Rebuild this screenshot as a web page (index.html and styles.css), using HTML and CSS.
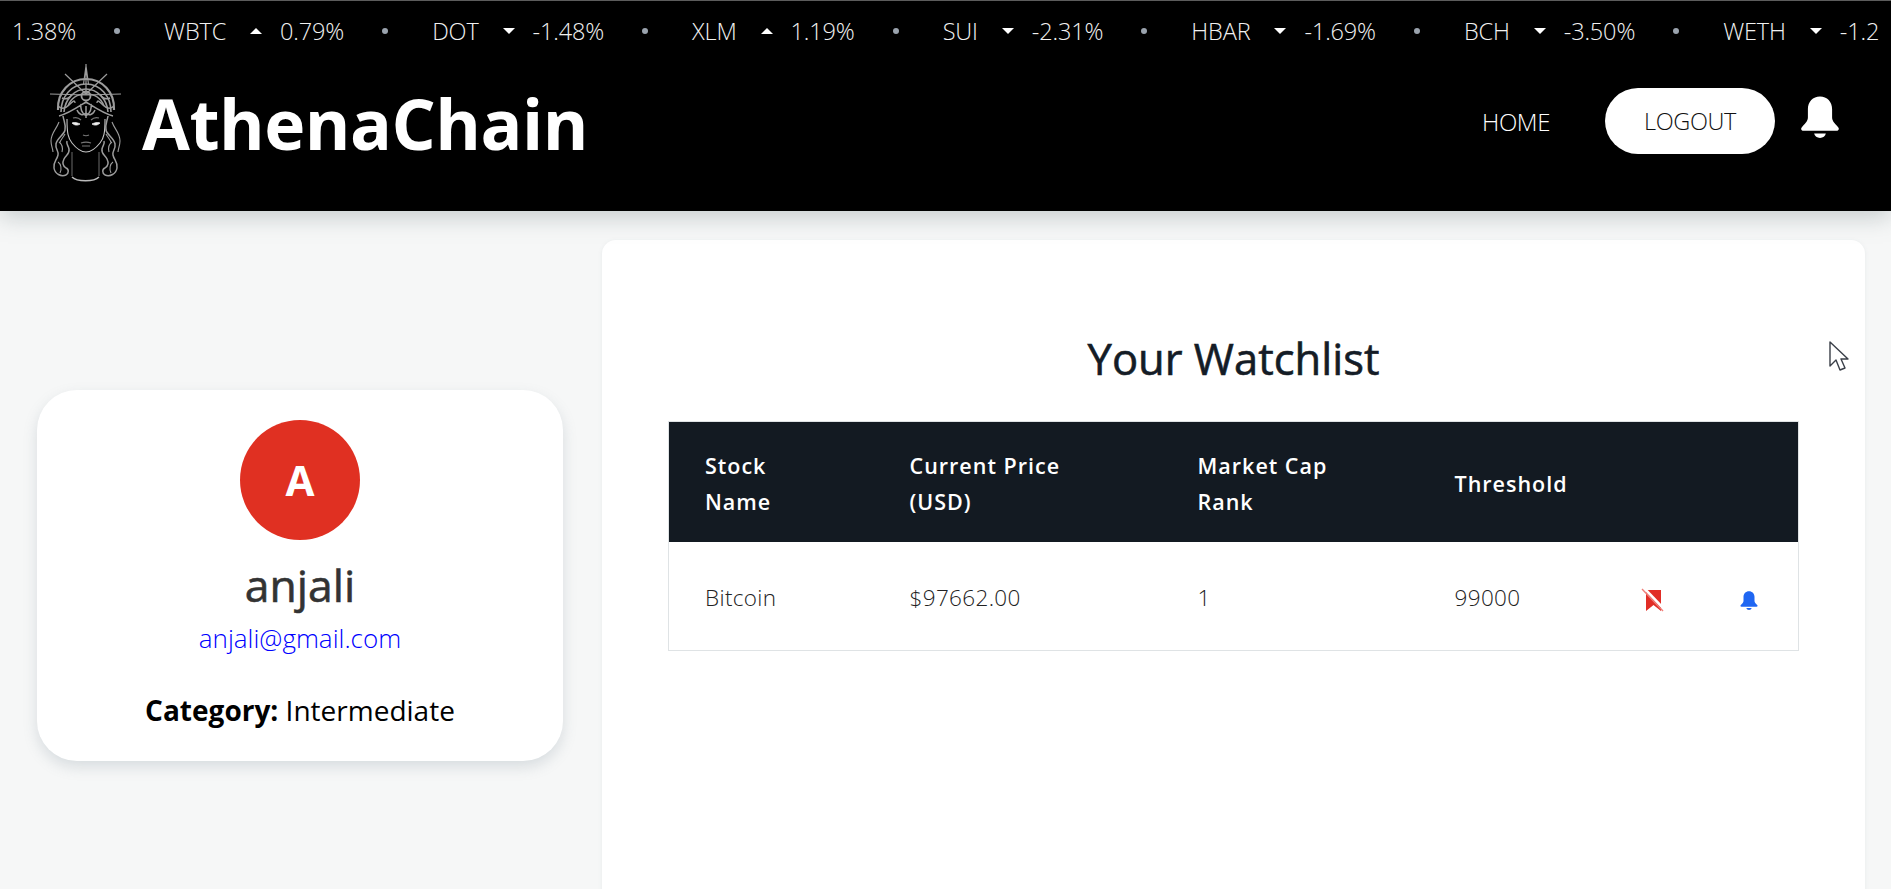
FILE: index.html
```html
<!DOCTYPE html>
<html lang="en">
<head>
<meta charset="utf-8">
<title>AthenaChain</title>
<link rel="stylesheet" href="styles.css">
</head>
<body>
<header class="header">
  <div class="ticker">
    <span class="val first">1.38%</span><i class="dot"></i>
    <span class="sym">WBTC</span><i class="up"></i><span class="val">0.79%</span><i class="dot"></i>
    <span class="sym">DOT</span><i class="down"></i><span class="val">-1.48%</span><i class="dot"></i>
    <span class="sym">XLM</span><i class="up"></i><span class="val">1.19%</span><i class="dot"></i>
    <span class="sym">SUI</span><i class="down"></i><span class="val">-2.31%</span><i class="dot"></i>
    <span class="sym">HBAR</span><i class="down"></i><span class="val">-1.69%</span><i class="dot"></i>
    <span class="sym">BCH</span><i class="down"></i><span class="val">-3.50%</span><i class="dot"></i>
    <span class="sym">WETH</span><i class="down"></i><span class="val">-1.2</span>
  </div>
  <div class="navbar">
    <div class="brand">
      <svg class="logo" viewBox="0 0 75 120" fill="none" stroke="#9c9c9c" stroke-width="1.2" aria-hidden="true">
        <path d="M38 0v30M38 2l-2.500 18M38 2l2.500 18M17 10l21 20M59 10L38 30M2 30l36 1M73 30l-35 1" />
        <path d="M10 46C9 28 22 15 38 15s29 13 28 31" stroke-width="2.200"/>
        <path d="M13 48C13 32 24 20 38 20s25 12 25 28M16 48C17 35 27 25 38 25s21 10 22 23M20 42c3-8 10-12 18-12s15 4 18 12" stroke-width="1.600"/>
        <path d="M10 42c4 4 8 2 11-1s6-6 6-2M66 42c-4 4-8 2-11-1s-6-6-6-2M14 34c4 2 8 0 10-4M62 34c-4 2-8 0-10-4" stroke-width="1.400"/>
        <circle cx="38" cy="32" r="4.500" stroke-width="1.800"/>
        <path d="M11 52c9-2 19-9 27-14 8 5 18 12 27 14M33 40c-1 5 1 9 5 12 4-3 6-7 5-12M38 42v12M29 46c2 5 6 6 9 3M47 46c-2 5-6 6-9 3" stroke-width="1.500"/>
        <path d="M19 55c0 14 1 19 5 24 4 5 9 9 14 9s10-4 14-9c4-5 5-10 5-24" stroke="#c4c4c4" stroke-width="1.100"/>
        <path d="M24 59c3-1 6 0 8 1-3 2-6 1-8-1zM52 59c-3-1-6 0-8 1 3 2 6 1 8-1z" fill="#eee" stroke="#eee" stroke-width=".8"/>
        <path d="M25 54c3-1 6 0 8 2M51 54c-3-1-6 0-8 2M35 71c2 1 4 1 6 0M33 79c3-1 7-1 10 0M34 82h8" stroke="#777"/>
        <path d="M15 52c1 6 3 8 2 14-1 5-8 8-9 14-1 5 3 7 2 11-1 5-5 7-4 13 1 6 7 9 12 7 3-2 3-6 0-7-3-2-4-5-2-9s6-5 5-10c-1-4-3-5-2-8" stroke-width="1.500"/>
        <path d="M60 52c-1 6-3 8-2 14 1 5 8 8 9 14 1 5-3 7-2 11 1 5 5 7 4 13-1 6-7 9-12 7-3-2-3-6 0-7 3-2 4-5 2-9s-6-5-5-10c1-4 3-5 2-8" stroke-width="1.500"/>
        <path d="M11 58c-3 8-8 11-8 19 0 5 2 8 2 11M64 58c3 8 8 11 8 19 0 5-2 8-2 11M11 78c3 2 4 6 3 10M64 78c-3 2-4 6-3 10M10 98c3 2 4 7 2 11M65 98c-3 2-4 7-2 11M17 70c-2 4-5 6-5 9M58 70c2 4 5 6 5 9" stroke-width="1.100"/>
        <path d="M24 88v24M51 88v24" stroke="#777" stroke-width=".9"/>
        <path d="M24 113c5 5 22 5 27 0" stroke="#bbb" stroke-width="1.400"/>
      </svg>
      <span class="brand-name">AthenaChain</span>
    </div>
    <nav class="nav">
      <a class="nav-link">HOME</a>
      <a class="logout">LOGOUT</a>
      <svg class="nav-bell" viewBox="0 0 24 24" fill="#fff" aria-hidden="true">
        <path d="M12 .8c-3.900 0-6.600 2.900-6.600 6.800v4.600c0 1.700-.9 3-3.200 5.200-.9.900-.4 2.100.8 2.100h18c1.200 0 1.700-1.200.8-2.100-2.300-2.200-3.200-3.500-3.200-5.200V7.600C18.600 3.700 15.900.8 12 .8z"/>
        <path d="M8.800 21h6.400c-.3 1.500-1.600 2.400-3.200 2.400S9.100 22.500 8.800 21z"/>
      </svg>
    </nav>
  </div>
</header>

<div class="page">
  <aside class="side">
    <section class="card">
      <div class="avatar">A</div>
      <h2 class="name">anjali</h2>
      <p class="email">anjali@gmail.com</p>
      <p class="category"><strong>Category:</strong> Intermediate</p>
    </section>
  </aside>
  <main class="panel">
    <h1 class="title">Your Watchlist</h1>
    <table class="table">
      <colgroup>
        <col class="c1"><col class="c2"><col class="c3"><col class="c4"><col class="c5"><col class="c6">
      </colgroup>
      <thead>
        <tr>
          <th>Stock<br>Name</th>
          <th>Current Price<br>(USD)</th>
          <th>Market Cap<br>Rank</th>
          <th>Threshold</th>
          <th></th>
          <th></th>
        </tr>
      </thead>
      <tbody>
        <tr>
          <td>Bitcoin</td>
          <td>$97662.00</td>
          <td>1</td>
          <td>99000</td>
          <td class="icon-cell">
            <svg class="row-icon mark" viewBox="0 0 24 24" aria-hidden="true">
              <path fill="#e12d26" d="M5 2h15v21l-7.500-6L5 23z"/>
              <path d="M3 0l20 21" stroke="#fff" stroke-width="2.600"/>
              <path d="M1 1l21 22" stroke="#f07f7a" stroke-width="1.400"/>
            </svg>
          </td>
          <td class="icon-cell">
            <svg class="row-icon" viewBox="0 0 24 24" fill="#1f66f2" aria-hidden="true">
              <path d="M12 .8c-3.900 0-6.600 2.900-6.600 6.800v4.600c0 1.700-.9 3-3.200 5.200-.9.900-.4 2.100.8 2.100h18c1.200 0 1.700-1.200.8-2.100-2.300-2.200-3.200-3.500-3.200-5.200V7.600C18.600 3.700 15.900.8 12 .8z"/>
              <path d="M8.800 21h6.400c-.3 1.500-1.600 2.400-3.200 2.400S9.100 22.500 8.800 21z"/>
            </svg>
          </td>
        </tr>
      </tbody>
    </table>
    <svg class="cursor" viewBox="0 0 20 31" aria-hidden="true">
      <path d="M1 1v24l6-6 4 10 5-2-4-9h7z" fill="#fff" stroke="#3a3f48" stroke-width="1.400" stroke-linejoin="round"/>
    </svg>
  </main>
</div>
</body>
</html>
```

FILE: styles.css
```css
* { box-sizing: border-box; }
html, body { margin: 0; height: 100%; overflow: hidden; }
body {
  background: #f6f7f7;
  font-family: "Open Sans", "Noto Sans", sans-serif;
  color: #111;
}

/* Header */
.header {
  height: 211px;
  background: #000;
  color: #fff;
  border-top: 1px solid #5c5c5c;
  box-shadow: 0 6px 22px rgba(110, 125, 130, 0.35);
  position: relative;
  z-index: 1;
  overflow: hidden;
}
.ticker {
  height: 60px;
  padding-left: 12px;
  display: flex;
  align-items: center;
  white-space: nowrap;
  font-size: 23.500px;
  font-weight: 300;
  letter-spacing: -0.15px;
  color: #f1f1f1;
}
.sym { margin-left: 44px; }
.val { margin-left: 18px; }
.val.first { margin-left: 0; }
.dot {
  width: 6px;
  height: 6px;
  margin-left: 38px;
  border-radius: 50%;
  background: #9aa3ad;
  flex: none;
}
.up, .down {
  width: 0;
  height: 0;
  flex: none;
  margin-left: 24px;
  border-left: 6px solid transparent;
  border-right: 6px solid transparent;
}
.up { border-bottom: 6px solid #fff; }
.down { border-top: 6px solid #fff; }

.navbar {
  height: 150px;
  padding: 0 49px 22px 48px;
  display: flex;
  align-items: center;
  justify-content: space-between;
}
.brand { display: flex; align-items: center; gap: 19px; }
.logo { width: 75px; height: 120px; margin-top: -2px; }
.brand-name {
  font-size: 69.500px;
  font-weight: 700;
  letter-spacing: -0.5px;
  line-height: 1;
  margin-top: -3px;
}
.nav { display: flex; align-items: center; margin-top: -8px; }
.nav-link { font-size: 24px; font-weight: 300; letter-spacing: -0.4px; }
.logout {
  width: 170px;
  height: 66px;
  margin-left: 55px;
  border-radius: 33px;
  background: #fff;
  color: #111;
  font-size: 23.500px;
  font-weight: 300;
  letter-spacing: -0.4px;
  display: flex;
  align-items: center;
  justify-content: center;
}
.nav-bell { width: 44px; height: 46px; margin: -8px 0 0 23px; }

/* Body */
.page { display: flex; align-items: flex-start; padding: 29px 26px 0 37px; }
.side { width: 526px; flex: none; padding-top: 150px; }
.card {
  height: 371px;
  padding-top: 30px;
  background: #fff;
  border-radius: 40px;
  box-shadow: 0 6px 14px rgba(120, 140, 150, 0.24);
  text-align: center;
}
.avatar {
  width: 120px;
  height: 120px;
  margin: 0 auto;
  border-radius: 50%;
  background: #e03022;
  color: #fff;
  font-size: 42px;
  font-weight: 700;
  line-height: 120px;
}
.name {
  margin: 16px 0 0;
  font-size: 44.500px;
  font-weight: 400;
  -webkit-text-stroke: 0.6px #333;
  line-height: 58px;
  color: #333;
}
.email {
  margin: 8px 0 0;
  font-size: 26px;
  font-weight: 300;
  line-height: 32px;
  color: #0000ff;
}
.category {
  margin: 38px 0 0;
  font-size: 28px;
  line-height: 36px;
  color: #000;
}
.category strong { font-weight: 700; }

.panel {
  position: relative;
  width: 1263px;
  height: 900px;
  margin-left: 39px;
  padding: 90px 66px 0;
  background: #fff;
  border-radius: 14px;
  box-shadow: 0 1px 4px rgba(120, 140, 150, 0.12);
}
.title {
  margin: 0;
  height: 91px;
  font-size: 43.500px;
  font-weight: 400;
  -webkit-text-stroke: 0.6px #141c26;
  line-height: 58px;
  text-align: center;
  color: #141c26;
}
.table {
  width: 1130px;
  border-collapse: collapse;
  table-layout: fixed;
  border: 1px solid #dfe3e5;
}
.c1 { width: 205px; }
.c2 { width: 288px; }
.c3 { width: 257px; }
.c4 { width: 186px; }
.c5 { width: 96px; }
.c6 { width: 98px; }
.table th {
  height: 120px;
  padding: 4px 0 0 36px;
  background: #131a22;
  color: #fff;
  font-size: 21.500px;
  font-weight: 600;
  line-height: 36px;
  letter-spacing: 1px;
  text-align: left;
}
.table td {
  height: 109px;
  padding: 4px 0 0 36px;
  font-size: 22.500px;
  font-weight: 300;
  letter-spacing: 0.35px;
  color: #222;
}
.table td.icon-cell { padding: 4px 0 0; text-align: center; }
.row-icon { width: 20px; height: 21px; display: inline-block; vertical-align: middle; }
.row-icon.mark { width: 24px; height: 24px; }

.cursor {
  position: absolute;
  left: 1227px;
  top: 101px;
  width: 20px;
  height: 31px;
}
```
